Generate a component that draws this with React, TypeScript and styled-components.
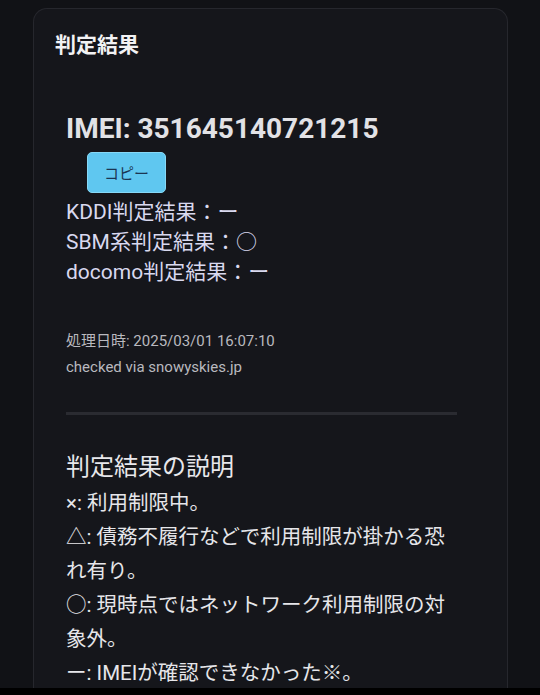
import styled, { createGlobalStyle } from "styled-components";

const GlobalStyle = createGlobalStyle`
  html, body {
    margin: 0;
    padding: 0;
    background: #111216;
  }
  body {
    font-family: Roboto, "Noto Sans CJK JP", sans-serif;
    color: #e4e4e8;
  }
`;

const Frame = styled.div`
  height: 695px;
  display: flex;
  flex-direction: column;
  overflow: hidden;
  background: #111216;
`;

const Main = styled.div`
  flex: 1;
  min-height: 0;
  overflow: hidden;
  padding: 8px 32px 0 33px;
`;

const Card = styled.div`
  background: #15161b;
  border: 1px solid #26272d;
  border-bottom: none;
  border-radius: 14px 14px 0 0;
  padding: 22px 21px 0 21px;
  min-height: 100%;
  box-sizing: border-box;
`;

const CardTitle = styled.h2`
  margin: 0;
  font-size: 21px;
  line-height: 28px;
  font-weight: 700;
  color: #f2f2f4;
`;

const Result = styled.div`
  padding-left: 11px;
  width: 391px;
`;

const Imei = styled.div`
  margin-top: 53px;
  font-size: 28px;
  line-height: 34px;
  font-weight: 700;
  color: #e2e2e6;
`;

const CopyButton = styled.button`
  display: flex;
  align-items: center;
  justify-content: center;
  margin: 6px 0 0 21px;
  width: 79px;
  height: 41px;
  padding: 0;
  border: 1px solid #86d8f6;
  border-radius: 5px;
  background: #5fc7f0;
  color: #1b3552;
  font-family: Roboto, "Noto Sans CJK JP", sans-serif;
  font-size: 15px;
`;

const Carriers = styled.div`
  margin-top: 4px;
`;

const CarrierLine = styled.div`
  font-size: 21px;
  line-height: 30px;
  color: #d9d9ef;
`;

const Meta = styled.div`
  margin-top: 41px;
  font-size: 15px;
  line-height: 26px;
  color: #b9b9bf;
`;

const Divider = styled.hr`
  margin: 32px 0 0 0;
  height: 3px;
  border: none;
  background: #2a2b31;
  width: 391px;
`;

const SectionTitle = styled.h3`
  margin: 35px 0 0 0;
  font-size: 24px;
  line-height: 34px;
  font-weight: 400;
  color: #e8e8ec;
`;

const Legend = styled.div`
  margin-top: 2px;
  width: 395px;
  font-size: 20.5px;
  line-height: 34px;
  color: #e6e6ea;
`;

const LegendItem = styled.div``;

const BottomBar = styled.div`
  height: 7px;
  flex: none;
  background: #000;
`;

const carriers = [
  { name: "KDDI判定結果", value: "ー" },
  { name: "SBM系判定結果", value: "○" },
  { name: "docomo判定結果", value: "ー" },
];

const legend = [
  "×: 利用制限中。",
  "△: 債務不履行などで利用制限が掛かる恐れ有り。",
  "○: 現時点ではネットワーク利用制限の対象外。",
  "ー: IMEIが確認できなかった※。",
];

export default function App() {
  return (
    <>
      <GlobalStyle />
      <Frame>
        <Main>
          <Card>
            <CardTitle>判定結果</CardTitle>
            <Result>
              <Imei>IMEI: 351645140721215</Imei>
              <CopyButton>コピー</CopyButton>
              <Carriers>
                {carriers.map((c) => (
                  <CarrierLine key={c.name}>
                    {c.name}：{c.value}
                  </CarrierLine>
                ))}
              </Carriers>
              <Meta>
                処理日時: 2025/03/01 16:07:10
                <br />
                checked via snowyskies.jp
              </Meta>
              <Divider />
              <SectionTitle>判定結果の説明</SectionTitle>
              <Legend>
                {legend.map((t) => (
                  <LegendItem key={t}>{t}</LegendItem>
                ))}
              </Legend>
            </Result>
          </Card>
        </Main>
        <BottomBar />
      </Frame>
    </>
  );
}
